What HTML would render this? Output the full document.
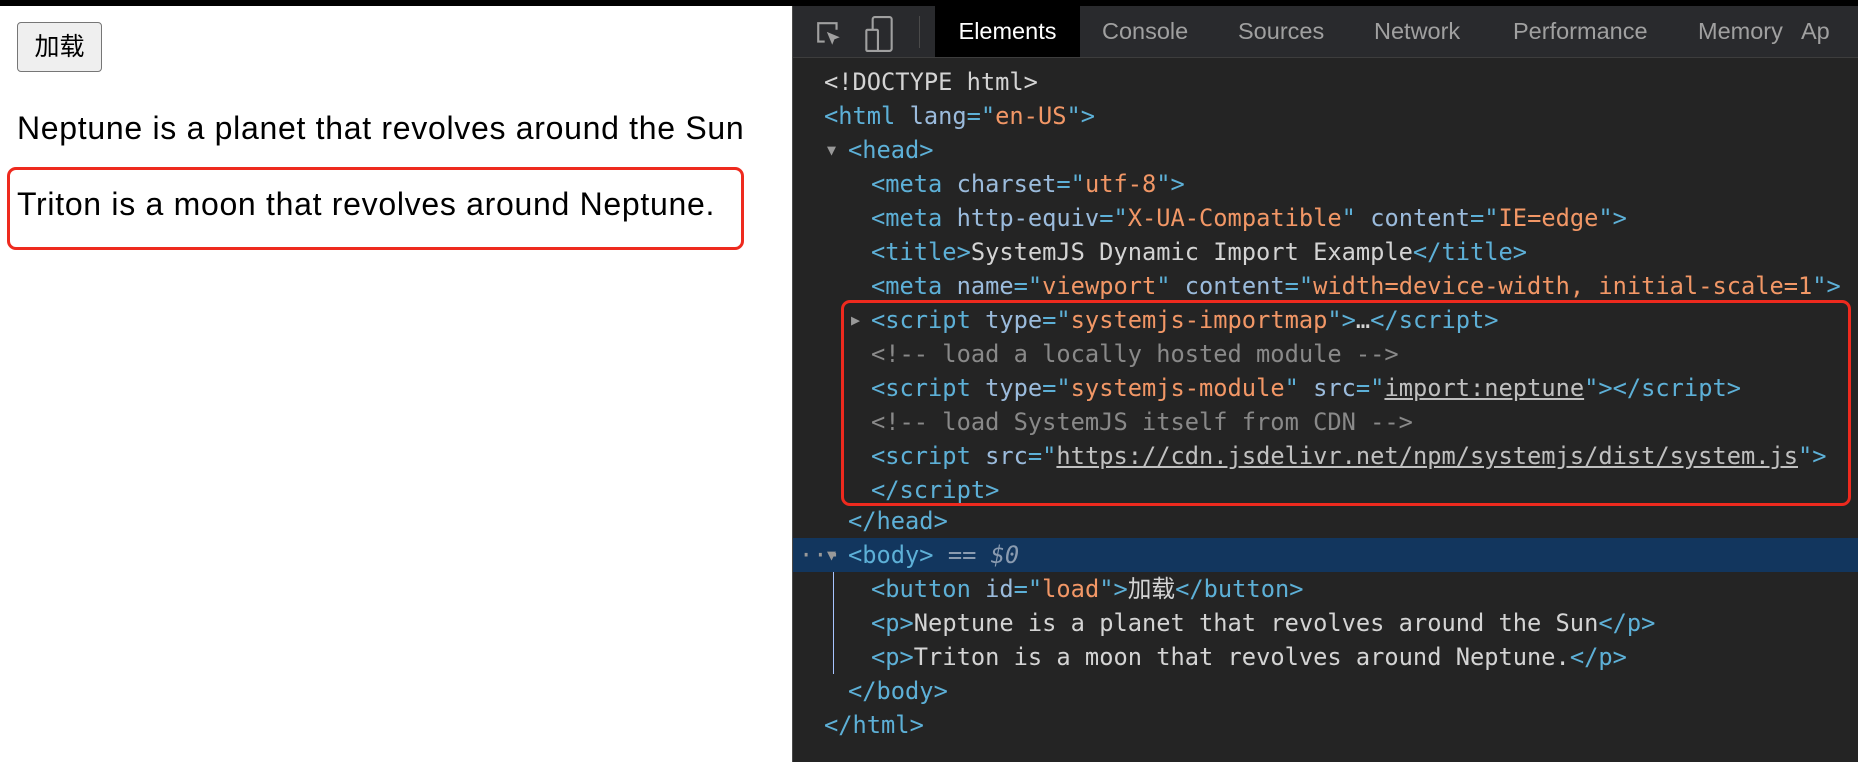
<!DOCTYPE html>
<html><head><meta charset="utf-8"><style>
body{margin:0;width:1858px;height:762px;overflow:hidden;background:#fff;position:relative;font-family:"Liberation Sans","Noto Sans CJK SC",sans-serif}
.topbar{position:absolute;left:0;top:0;width:1858px;height:6px;background:#000}
.btn{position:absolute;left:17px;top:22px;width:83px;height:48px;background:#efefef;border:1px solid #767676;border-radius:4px;font-size:25px;line-height:48px;text-align:center;color:#000}
.p{position:absolute;left:17px;font-size:32px;letter-spacing:0.7px;color:#000;white-space:nowrap;line-height:34px}
.rbox{position:absolute;left:7px;top:167px;width:731px;height:77px;border:3px solid #ee2a1e;border-radius:9px}
.dt{position:absolute;left:792px;top:6px;width:1066px;height:756px;background:#242424;border-left:1px solid #4a4a4a}
.tb{position:absolute;left:0;top:0;width:1066px;height:51px;background:#292a2d;border-bottom:1px solid #3d3d3d}
.tab{position:absolute;top:0;height:51px;line-height:51px;font-size:23.5px;color:#a0a0a0;white-space:nowrap}
.code{position:absolute;font-family:"DejaVu Sans Mono","Liberation Mono","Noto Sans CJK SC",monospace;font-size:23.7px;white-space:pre;color:#d4d4d4;line-height:34px;height:34px}
.t{color:#5db0d7}.a{color:#9bbbdc}.v{color:#f29766}.c{color:#898989}.u{text-decoration:underline;color:#c0c0c0}
.sel{position:absolute;left:0;top:532px;width:1066px;height:34px;background:#12365e}
.dbox{position:absolute;left:48px;top:294px;width:1004px;height:200px;border:3px solid #ee2a1e;border-radius:9px}
</style></head><body>
<div class="topbar"></div>
<div class="btn">加载</div>
<div class="p" style="top:111px">Neptune is a planet that revolves around the Sun</div>
<div class="p" style="top:187px">Triton is a moon that revolves around Neptune.</div>
<div class="rbox"></div>
<div class="dt">
 <div class="tb">
  <svg style="position:absolute;left:22px;top:14px" width="28" height="28" viewBox="0 0 26 26"><path d="M9 20H3V3h17v6" fill="none" stroke="#a0a0a0" stroke-width="2"/><path d="M11 11l12 5-5 2-2 5z" fill="#a0a0a0"/></svg>
  <svg style="position:absolute;left:71px;top:9px" width="30" height="38" viewBox="0 0 28 36"><rect x="8" y="2" width="18" height="32" rx="2" fill="none" stroke="#a0a0a0" stroke-width="2"/><rect x="2" y="14" width="11" height="20" rx="1" fill="#292a2d" stroke="#a0a0a0" stroke-width="2"/></svg>
  <div style="position:absolute;left:126px;top:10px;width:1px;height:32px;background:#4a4a4a"></div>
  <div class="tab" style="left:142px;width:145px;background:#000;color:#fff;text-align:center">Elements</div>
  <div class="tab" style="left:309px">Console</div>
  <div class="tab" style="left:445px">Sources</div>
  <div class="tab" style="left:581px">Network</div>
  <div class="tab" style="left:720px">Performance</div>
  <div class="tab" style="left:905px">Memory</div>
  <div class="tab" style="left:1008px">Ap</div>
 </div>
 <div class="sel"></div>
 <div style="position:absolute;left:40px;top:566px;width:1px;height:102px;background:#a7c4ff"></div>
 <div class="code" style="left:31px;top:59px">&lt;!DOCTYPE html&gt;</div>
 <div class="code" style="left:31px;top:93px"><span class="t">&lt;html</span> <span class="a">lang</span><span class="t">="</span><span class="v">en-US</span><span class="t">"&gt;</span></div>
 <div class="code" style="left:34px;top:127px;font-size:15px;color:#999">▼</div>
 <div class="code" style="left:55px;top:127px"><span class="t">&lt;head&gt;</span></div>
 <div class="code" style="left:78px;top:161px"><span class="t">&lt;meta</span> <span class="a">charset</span><span class="t">="</span><span class="v">utf-8</span><span class="t">"&gt;</span></div>
 <div class="code" style="left:78px;top:195px"><span class="t">&lt;meta</span> <span class="a">http-equiv</span><span class="t">="</span><span class="v">X-UA-Compatible</span><span class="t">"</span> <span class="a">content</span><span class="t">="</span><span class="v">IE=edge</span><span class="t">"&gt;</span></div>
 <div class="code" style="left:78px;top:229px"><span class="t">&lt;title&gt;</span>SystemJS Dynamic Import Example<span class="t">&lt;/title&gt;</span></div>
 <div class="code" style="left:78px;top:263px"><span class="t">&lt;meta</span> <span class="a">name</span><span class="t">="</span><span class="v">viewport</span><span class="t">"</span> <span class="a">content</span><span class="t">="</span><span class="v">width=device-width, initial-scale=1</span><span class="t">"&gt;</span></div>
 <div class="code" style="left:58px;top:297px;font-size:15px;color:#999">▶</div>
 <div class="code" style="left:78px;top:297px"><span class="t">&lt;script</span> <span class="a">type</span><span class="t">="</span><span class="v">systemjs-importmap</span><span class="t">"&gt;</span>…<span class="t">&lt;/script&gt;</span></div>
 <div class="code c" style="left:78px;top:331px">&lt;!-- load a locally hosted module --&gt;</div>
 <div class="code" style="left:78px;top:365px"><span class="t">&lt;script</span> <span class="a">type</span><span class="t">="</span><span class="v">systemjs-module</span><span class="t">"</span> <span class="a">src</span><span class="t">="</span><span class="u">import:neptune</span><span class="t">"&gt;&lt;/script&gt;</span></div>
 <div class="code c" style="left:78px;top:399px">&lt;!-- load SystemJS itself from CDN --&gt;</div>
 <div class="code" style="left:78px;top:433px"><span class="t">&lt;script</span> <span class="a">src</span><span class="t">="</span><span class="u">https://cdn.jsdelivr.net/npm/systemjs/dist/system.js</span><span class="t">"&gt;</span></div>
 <div class="code" style="left:78px;top:467px"><span class="t">&lt;/script&gt;</span></div>
 <div class="dbox"></div>
 <div class="code" style="left:55px;top:498px"><span class="t">&lt;/head&gt;</span></div>
 <div class="code" style="left:6px;top:532px;color:#999">···</div>
 <div class="code" style="left:34px;top:532px;font-size:15px;color:#999">▼</div>
 <div class="code" style="left:55px;top:532px"><span class="t">&lt;body&gt;</span> <span style="color:#8a9bb0">== <i>$0</i></span></div>
 <div class="code" style="left:78px;top:566px"><span class="t">&lt;button</span> <span class="a">id</span><span class="t">="</span><span class="v">load</span><span class="t">"&gt;</span>加载<span class="t">&lt;/button&gt;</span></div>
 <div class="code" style="left:78px;top:600px"><span class="t">&lt;p&gt;</span>Neptune is a planet that revolves around the Sun<span class="t">&lt;/p&gt;</span></div>
 <div class="code" style="left:78px;top:634px"><span class="t">&lt;p&gt;</span>Triton is a moon that revolves around Neptune.<span class="t">&lt;/p&gt;</span></div>
 <div class="code" style="left:55px;top:668px"><span class="t">&lt;/body&gt;</span></div>
 <div class="code" style="left:31px;top:702px"><span class="t">&lt;/html&gt;</span></div>
</div>
</body></html>
